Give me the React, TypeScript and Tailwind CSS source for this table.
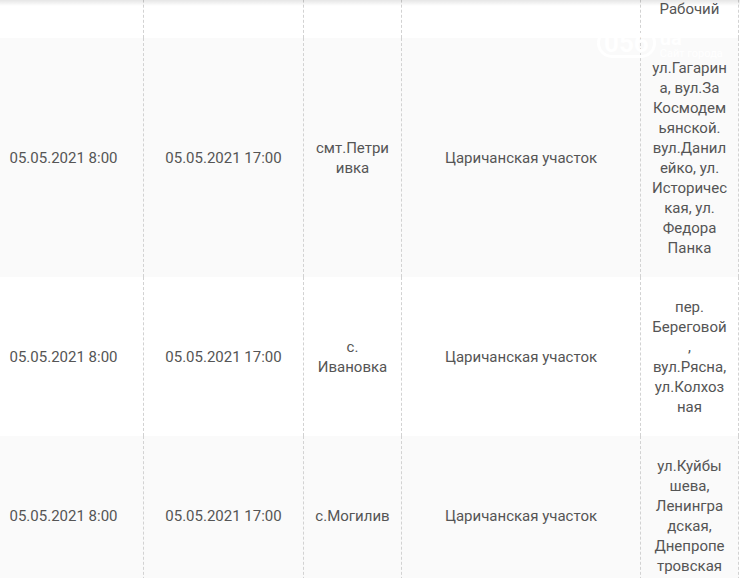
import React from "react";

type Row = {
    start: string;
    end: string;
    place: string[];
    area: string;
    streets: string[];
    shaded: boolean;
};

// строки адресов разбиты так же, как на сайте
const rows: Row[] = [
    { start: "05.05.2021 8:00", end: "05.05.2021 17:00", place: ["с.Залелия"], area: "Царичанская участок", streets: ["ул.Садова", "я, пер.", "Рабочий"], shaded: false },
    {
        start: "05.05.2021 8:00", end: "05.05.2021 17:00", place: ["смт.Петри", "ивка"], area: "Царичанская участок",
        streets: ["ул.Гагарин", "а, вул.За", "Космодем", "ьянской.", "вул.Данил", "ейко, ул.", "Историчес", "кая, ул.", "Федора", "Панка"], shaded: true,
    },
    {
        start: "05.05.2021 8:00", end: "05.05.2021 17:00", place: ["с.", "Ивановка"], area: "Царичанская участок",
        streets: ["пер.", "Береговой", ",", "вул.Рясна,", "ул.Колхоз", "ная"], shaded: false,
    },
    {
        start: "05.05.2021 8:00", end: "05.05.2021 17:00", place: ["с.Могилив"], area: "Царичанская участок",
        streets: ["ул.Куйбы", "шева,", "Ленингра", "дская,", "Днепропе", "тровская"], shaded: true,
    },
];

function Cell({ lines }: { lines: string[] }) {
    return (
        <div className="flex items-center justify-center border-r border-dashed border-[#d2d2d2] px-2 py-[19.5px] text-center">
            <div className="flex flex-col whitespace-nowrap">
                {lines.map((l, i) => (
                    <span key={i}>{l}</span>
                ))}
            </div>
        </div>
    );
}

export default function App() {
    return (
        <div className="relative h-[578px] w-[740px] overflow-hidden bg-white font-['Roboto',sans-serif] text-[15px] leading-5 text-[#555]">
            {/* таблица отключений, прокрученная вниз */}
            <div className="-ml-4 -mt-[61px] grid grid-cols-[160px_160px_98px_239px_98px]">
                {rows.map((r, i) => (
                    <div key={i} className={`col-span-5 grid grid-cols-subgrid ${r.shaded ? "bg-[#fafafa]" : "bg-white"}`}>
                        <Cell lines={[r.start]} />
                        <Cell lines={[r.end]} />
                        <Cell lines={r.place} />
                        <Cell lines={[r.area]} />
                        <Cell lines={r.streets} />
                    </div>
                ))}
            </div>

            {/* водяной знак сайта */}
            <div className="pointer-events-none absolute left-[597px] top-[28px] flex items-start gap-1 text-white">
                <div className="rounded-full border-[3px] border-white px-1 text-[26px] font-bold leading-6">056</div>
                <div className="flex flex-col">
                    <span className="text-[20px] font-bold leading-5">ua</span>
                    <span className="text-[11px] leading-3">Сайт города</span>
                </div>
            </div>

            {/* тень сверху */}
            <div className="pointer-events-none absolute inset-x-0 top-0 h-[6px] bg-gradient-to-b from-black/10 to-transparent" />
        </div>
    );
}
